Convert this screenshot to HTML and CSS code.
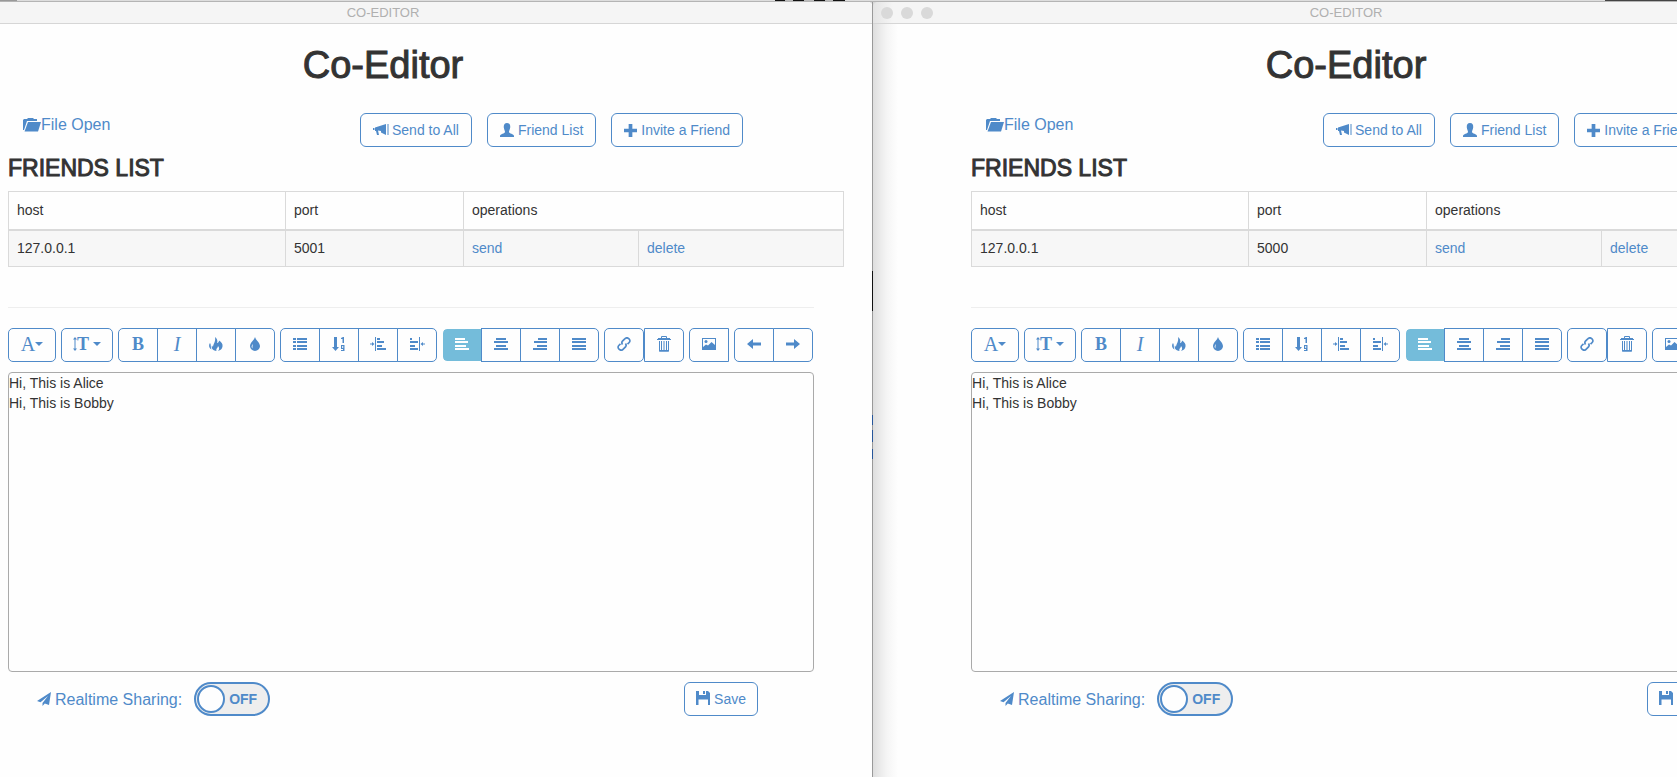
FILE: index.html
```html
<!DOCTYPE html>
<html lang="en">
<head>
<meta charset="utf-8">
<title>Co-Editor</title>
<link rel="stylesheet" href="styles.css">
</head>
<body>
<svg class="sprite" aria-hidden="true">
  <symbol id="i-folder" viewBox="0 0 18 14"><path d="M0 12V2l1-1h3l1-1h5l1 1h3v2H4L1 12z"/><path d="M5 4h13l-3 9.500H1.500z"/></symbol>
  <symbol id="i-bullhorn" viewBox="0 0 16 14"><path d="M14.500 1v11h1V1zM0 5h1.500v2H0zM2 4.500l11-3.500v11L8 9.500V8L5 7.500 6 12H4L3 8H2z"/></symbol>
  <symbol id="i-user" viewBox="0 0 14 14"><path d="M7 0C4.500 0 3.500 2 3.800 4.500 4 6.500 5 7.500 5 9c0 1.500-5 2-5 4v1h14v-1c0-2-5-2.500-5-4 0-1.500 1-2.500 1.200-4.500C10.500 2 9.500 0 7 0z"/></symbol>
  <symbol id="i-plus" viewBox="0 0 14 14"><path d="M5 0h4v5h5v4H9v5H5V9H0V5h5z"/></symbol>
  <symbol id="i-fire" viewBox="0 0 14 14"><path d="M6 0c2 1.500 3 3.500 2 6 1.200-.3 2-1 2-2.500 2.500 1.500 4 3.500 3.500 6-.4 2.500-2 3.800-4.500 4.500 1.500-1.800 1.500-3.500 0-5-.2 1.500-1 2-1.500 3-.4.700-.3 1.300 0 2C3.500 13.500 2 11 3 8.500L4 10C4 7 7 5 6 0z"/><path d="M1 6C2.300 7.500 1.300 10 2.500 12.500-.3 11-.5 8 1 6z"/></symbol>
  <symbol id="i-drop" viewBox="0 0 14 14"><path fill-rule="evenodd" d="M7 0c1 3.500 5 5.500 5 9.200A5 5 0 0 1 7 14 5 5 0 0 1 2 9.200C2 5.500 6 3.500 7 0zM5 7C3.500 8.500 3 10 4.500 11.500 4.300 10 4.500 8.500 5 7z"/></symbol>
  <symbol id="i-list" viewBox="0 0 14 14"><path d="M0 1h3v2H0zM4 1h10v2H4zM0 4h3v2H0zM4 4h10v2H4zM0 8h3v2H0zM4 8h10v2H4zM0 11h3v2H0zM4 11h10v2H4z"/></symbol>
  <symbol id="i-order" viewBox="0 0 14 14"><path d="M2 0h3v10h2l-3.500 4L0 10h2zM9 1l2-1h1v6h-1.500V2H9z"/><path fill-rule="evenodd" d="M9 8h3.500v6H9v-1h2v-1H9zm1.200 1v2h1V9z"/></symbol>
  <symbol id="i-outdent" viewBox="0 0 16 14"><path d="M5 0h1v14H5zM0 6.500h2V5l2.500 2L2 9V7.500H0zM7 1h3v2H7zM7 4h7v2H7zM7 8h5v2H7zM7 11h9v2H7z"/></symbol>
  <symbol id="i-indent" viewBox="0 0 16 14"><path d="M10 0h1v14h-1zM16 6.500h-2V5l-2.500 2L14 9V7.500h2zM1 1h2v2H1zM1 4h8v2H1zM1 8h5v2H1zM1 11h8v2H1z"/></symbol>
  <symbol id="i-left" viewBox="0 0 14 14"><path d="M0 1h10v2H0zM0 4h13v2H0zM0 8h11v2H0zM0 11h14v2H0z"/></symbol>
  <symbol id="i-center" viewBox="0 0 14 14"><path d="M2 1h10v2H2zM0 4h14v2H0zM2 8h10v2H2zM0 11h14v2H0z"/></symbol>
  <symbol id="i-right" viewBox="0 0 14 14"><path d="M5 1h9v2H5zM1 4h13v2H1zM4 8h10v2H4zM0 11h14v2H0z"/></symbol>
  <symbol id="i-justify" viewBox="0 0 14 14"><path d="M0 1h14v2H0zM0 4h14v2H0zM0 8h14v2H0zM0 11h14v2H0z"/></symbol>
  <symbol id="i-link" viewBox="0 0 14 14"><path fill="none" stroke="currentColor" stroke-width="1.700" d="M5.500 7.500C4.500 6 4.700 5 5.500 4L8 1.700c1-1 2.800-1 4 .1s1.200 2.700.2 3.700L10.500 7.200M8.500 6.500C9.500 8 9.300 9 8.500 10L6 12.300c-1 1-2.800 1-4-.1S.800 9.500 1.800 8.500L3.500 6.800"/></symbol>
  <symbol id="i-trash" viewBox="0 0 14 16"><path fill="none" stroke="currentColor" d="M4.500 2.500v-2h5v2M2.500 5v10h9V5M4.500 5v10M7 5v10M9.500 5v10"/><path d="M1 2h12v1h1v1H0V3h1zM2 14h10v1.500H2z"/></symbol>
  <symbol id="i-image" viewBox="0 0 14 14"><path fill-rule="evenodd" d="M0 1h14v12H0zm1 1v8l3-2.500 2 1L9.500 5 13 8V2z"/><circle cx="4" cy="4.500" r="1.500"/></symbol>
  <symbol id="i-prev" viewBox="0 0 14 14"><path d="M0 7l6-5v3.500h8v3H6V12z"/></symbol>
  <symbol id="i-next" viewBox="0 0 14 14"><path d="M14 7L8 2v3.500H0v3h8V12z"/></symbol>
  <symbol id="i-send" viewBox="0 0 14 14"><path d="M14 0L0 9l3.500 1.300L11 4l-5.500 7v3l2.300-2.500L12 13z"/></symbol>
  <symbol id="i-save" viewBox="0 0 14 14"><path fill-rule="evenodd" d="M0 0h3v4h7V0h2l2 2v12h-2V8.500H2.500V14H0zM7 0h2v3H7z"/></symbol>
  <symbol id="i-size" viewBox="0 0 4 14"><path d="M2 0l2 2.500H2.500v9H4L2 14 0 11.500h1.500v-9H0z"/></symbol>
</svg>

<div class="desktop-strip"></div>
<div class="desktop" id="desktop"></div>

<template id="window-template">
  <section class="window">
    <div class="titlebar">
      <div class="lights"><span></span><span></span><span></span></div>
      <div class="titlebar-text">CO-EDITOR</div>
    </div>
    <main class="document">
      <header class="page-head">
        <h1>Co-Editor</h1>
        <nav class="actions">
          <a class="file-open" href="#"><svg class="icon-folder"><use href="#i-folder"/></svg>File Open</a>
          <div class="action-buttons">
            <button class="btn"><svg class="icon icon-wide"><use href="#i-bullhorn"/></svg>Send to All</button>
            <button class="btn"><svg class="icon"><use href="#i-user"/></svg>Friend List</button>
            <button class="btn"><svg class="icon icon-plus"><use href="#i-plus"/></svg>Invite a Friend</button>
          </div>
        </nav>
      </header>
      <h2>FRIENDS LIST</h2>
      <table class="friends">
        <colgroup><col class="col-host"><col class="col-port"><col class="col-send"><col></colgroup>
        <thead><tr><th>host</th><th>port</th><th colspan="2">operations</th></tr></thead>
        <tbody><tr><td>127.0.0.1</td><td class="port"></td><td><a href="#">send</a></td><td><a href="#">delete</a></td></tr></tbody>
      </table>
      <div class="editor">
        <div class="toolbar">
          <div class="group"><button class="tool tool-font" aria-label="Font"><span class="letter">A</span><span class="caret"></span></button></div>
          <div class="group"><button class="tool tool-size" aria-label="Font size"><svg class="icon-size"><use href="#i-size"/></svg><span class="letter letter-bold">T</span><span class="caret caret-far"></span></button></div>
          <div class="group">
            <button class="tool" aria-label="Bold"><span class="letter letter-bold">B</span></button>
            <button class="tool" aria-label="Italic"><span class="letter letter-italic">I</span></button>
            <button class="tool" aria-label="Highlight"><svg class="icon"><use href="#i-fire"/></svg></button>
            <button class="tool" aria-label="Text colour"><svg class="icon"><use href="#i-drop"/></svg></button>
          </div>
          <div class="group">
            <button class="tool" aria-label="Bullet list"><svg class="icon"><use href="#i-list"/></svg></button>
            <button class="tool" aria-label="Number list"><svg class="icon"><use href="#i-order"/></svg></button>
            <button class="tool" aria-label="Reduce indent"><svg class="icon icon-wide"><use href="#i-outdent"/></svg></button>
            <button class="tool" aria-label="Indent"><svg class="icon icon-wide"><use href="#i-indent"/></svg></button>
          </div>
          <div class="group">
            <button class="tool tool-active" aria-label="Align left"><svg class="icon"><use href="#i-left"/></svg></button>
            <button class="tool" aria-label="Center"><svg class="icon"><use href="#i-center"/></svg></button>
            <button class="tool" aria-label="Align right"><svg class="icon"><use href="#i-right"/></svg></button>
            <button class="tool" aria-label="Justify"><svg class="icon"><use href="#i-justify"/></svg></button>
          </div>
          <div class="group group-loose">
            <button class="tool tool-link" aria-label="Link"><svg class="icon"><use href="#i-link"/></svg></button>
            <button class="tool" aria-label="Remove link"><svg class="icon icon-trash"><use href="#i-trash"/></svg></button>
          </div>
          <div class="group"><button class="tool tool-image" aria-label="Insert picture"><svg class="icon"><use href="#i-image"/></svg></button></div>
          <div class="group">
            <button class="tool" aria-label="Undo"><svg class="icon"><use href="#i-prev"/></svg></button>
            <button class="tool" aria-label="Redo"><svg class="icon"><use href="#i-next"/></svg></button>
          </div>
        </div>
        <textarea class="editor-text" aria-label="Document text" spellcheck="false">Hi, This is Alice
Hi, This is Bobby</textarea>
      </div>
      <footer class="foot">
        <label class="sharing">
          <svg class="icon"><use href="#i-send"/></svg>
          <span class="sharing-text">Realtime Sharing:</span>
          <input type="checkbox" class="sharing-input">
          <span class="switch"><span class="knob"></span>OFF</span>
        </label>
        <button class="btn btn-save"><svg class="icon"><use href="#i-save"/></svg>Save</button>
      </footer>
    </main>
  </section>
</template>
<script src="app.js"></script>
</body>
</html>
```

FILE: app.js
```js
const windows = [
  { port: "5001", className: "window-front" },
  { port: "5000", className: "window-back" },
];
const template = document.getElementById("window-template");
const desktop = document.getElementById("desktop");
for (const item of windows) {
  const node = template.content.cloneNode(true);
  node.querySelector(".window").classList.add(item.className);
  node.querySelector(".port").textContent = item.port;
  desktop.append(node);
}
```

FILE: styles.css
```css
* { box-sizing: border-box; }

:root {
  --blue: #4f8ac9;
  --ink: #333;
  --line: #dadada;
  --paper: #fefefe;
}

body {
  margin: 0;
  min-height: 100vh;
  display: flex;
  flex-direction: column;
  overflow: hidden;
  background: #d8d8d8;
  color: var(--ink);
  font: 14px/20px "Liberation Sans", Arial, sans-serif;
}

.sprite { position: absolute; width: 0; height: 0; }
svg { fill: currentColor; flex: none; }
a { color: var(--blue); text-decoration: none; }
button { font: inherit; color: inherit; cursor: pointer; }

.desktop-strip {
  height: 2px;
  border-bottom: 1px solid #b4b4b4;
  background: linear-gradient(90deg,
    #999 17px, #ddd 17px 775px,
    #111 775px 785px, #bbb 785px 793px,
    #111 793px 804px, #bbb 804px 814px,
    #111 814px 825px, #bbb 825px 833px,
    #111 833px 845px, #ddd 845px 1605px, #444 1605px);
}

.desktop { flex: 1; display: flex; }

.window { min-width: 0; overflow: hidden; background: var(--paper); }
.window-front {
  flex: 0 0 calc(52% + 1px);
  border-right: 1px solid #999;
  border-image: linear-gradient(180deg,
    #999 269px, #111 269px 309px, #999 309px 413px,
    #27569a 413px 423px, #999 423px 428px, #27569a 428px 440px,
    #999 440px 447px, #27569a 447px 457px, #999 457px) 1;
  border-top-right-radius: 5px;
}
.window-back {
  flex: 1;
  border-top-left-radius: 5px;
  background: linear-gradient(90deg, #dedede, #ececec 8px, #f5f5f5 14px, var(--paper) 25px);
}

.titlebar {
  display: flex;
  align-items: center;
  height: 22px;
  border-bottom: 1px solid #d6d6d6;
  background: #f5f5f5;
  color: #b0b0b0;
  font-size: 13px;
}
.window-back .titlebar { background: linear-gradient(90deg, #e4e4e4, #f5f5f5 20px); }
.lights { display: none; gap: 8px; padding-left: 8px; width: 98px; flex: none; }
.lights span { width: 12px; height: 12px; border-radius: 50%; background: #d9d9d9; }
.window-back .lights { display: flex; }
.window-front .titlebar { padding-left: 8px; }
.titlebar-text { flex: 0 0 750px; padding-top: 1px; text-align: center; }

.document { min-width: 836px; margin: 0 28px 0 8px; }
.window-back .document { margin-left: 98px; width: 836px; }

.page-head { max-width: 750px; }
h1 {
  margin: 21px 0 28px;
  text-align: center;
  font-size: 38px;
  line-height: 40px;
  font-weight: 400;
  -webkit-text-stroke: 1px var(--ink);
}
.actions {
  display: flex;
  justify-content: space-between;
  align-items: flex-start;
  padding: 0 15px;
  color: var(--blue);
}
.file-open { display: flex; align-items: center; font-size: 16px; line-height: 24px; }
.icon-folder { width: 18px; height: 14px; }
.action-buttons { display: flex; gap: 15px; }

.btn {
  display: flex;
  align-items: center;
  gap: 4px;
  height: 34px;
  padding: 0 12px;
  border: 1px solid var(--blue);
  border-radius: 6px;
  background: var(--paper);
  color: var(--blue);
}
.btn .icon-wide { margin-right: -1px; }
.icon { width: 14px; height: 14px; }
.icon-wide { width: 16px; }
.icon-trash { height: 16px; }
.icon-plus { width: 13px; height: 13px; }

h2 {
  margin: 9px 0 10px;
  font-size: 23px;
  line-height: 25px;
  font-weight: 400;
  -webkit-text-stroke: 1px var(--ink);
}

.friends {
  width: 100%;
  table-layout: fixed;
  border-collapse: collapse;
  text-align: left;
}
.col-host { width: 277px; }
.col-port { width: 178px; }
.col-send { width: 175px; }
.friends th, .friends td { height: 37px; padding: 0 8px; border: 1px solid var(--line); font-weight: 400; }
.friends th { height: 38px; border-bottom-width: 2px; }
.friends td { background: #f7f7f7; }

.editor { margin: 40px 30px 0 0; border-top: 1px solid #eee; padding-top: 20px; }
.toolbar { display: flex; gap: 5px; color: var(--blue); }
.group { display: flex; }
.tool {
  display: flex;
  align-items: center;
  justify-content: center;
  width: 40px;
  height: 34px;
  padding: 0 0 2px;
  border: 1px solid var(--blue);
  background: var(--paper);
}
.tool + .tool { margin-left: -1px; }
.group-loose .tool + .tool { margin-left: 0; }
.tool:first-child { border-top-left-radius: 5px; border-bottom-left-radius: 5px; }
.tool:last-child { border-top-right-radius: 5px; border-bottom-right-radius: 5px; }
.tool-font { width: 48px; }
.tool-size { width: 52px; }
.tool.tool-link { border-radius: 5px; }
.tool.tool-image { border-top-right-radius: 0; border-bottom-right-radius: 0; }
.tool-active {
  border-color: var(--paper);
  background: #74bcda;
  background-clip: padding-box;
  color: #fff;
}
.letter { font: 20px/20px "Liberation Serif", serif; }
.letter-bold { font-size: 18px; font-weight: 700; }
.letter-italic { font-style: italic; }
.icon-size { width: 4px; height: 14px; }
.caret { border: 4px solid transparent; border-top-color: currentColor; border-bottom: 0; }
.caret-far { margin-left: 4px; }

.editor-text {
  display: block;
  width: 100%;
  height: 300px;
  margin-top: 10px;
  padding: 0;
  border: 1px solid #aaa;
  border-radius: 4px;
  background: var(--paper);
  color: var(--ink);
  font: inherit;
  resize: none;
}

.foot {
  display: flex;
  justify-content: space-between;
  max-width: 750px;
  margin-top: 10px;
  padding-left: 29px;
  color: var(--blue);
}
.sharing { display: flex; align-items: center; font-size: 16px; }
.sharing-text { padding: 2px 12px 0 4px; }
.sharing-input { position: absolute; opacity: 0; }
.switch {
  display: flex;
  align-items: center;
  gap: 4px;
  width: 76px;
  height: 34px;
  padding-left: 1px;
  border: 2px solid var(--blue);
  border-radius: 17px;
  background: #eee;
  font-size: 14px;
  font-weight: 700;
}
.knob { width: 28px; height: 28px; border: 2px solid var(--blue); border-radius: 50%; background: var(--paper); }
.btn-save { padding: 0 11px; }
.btn-save .icon { margin-bottom: 3px; }
```
